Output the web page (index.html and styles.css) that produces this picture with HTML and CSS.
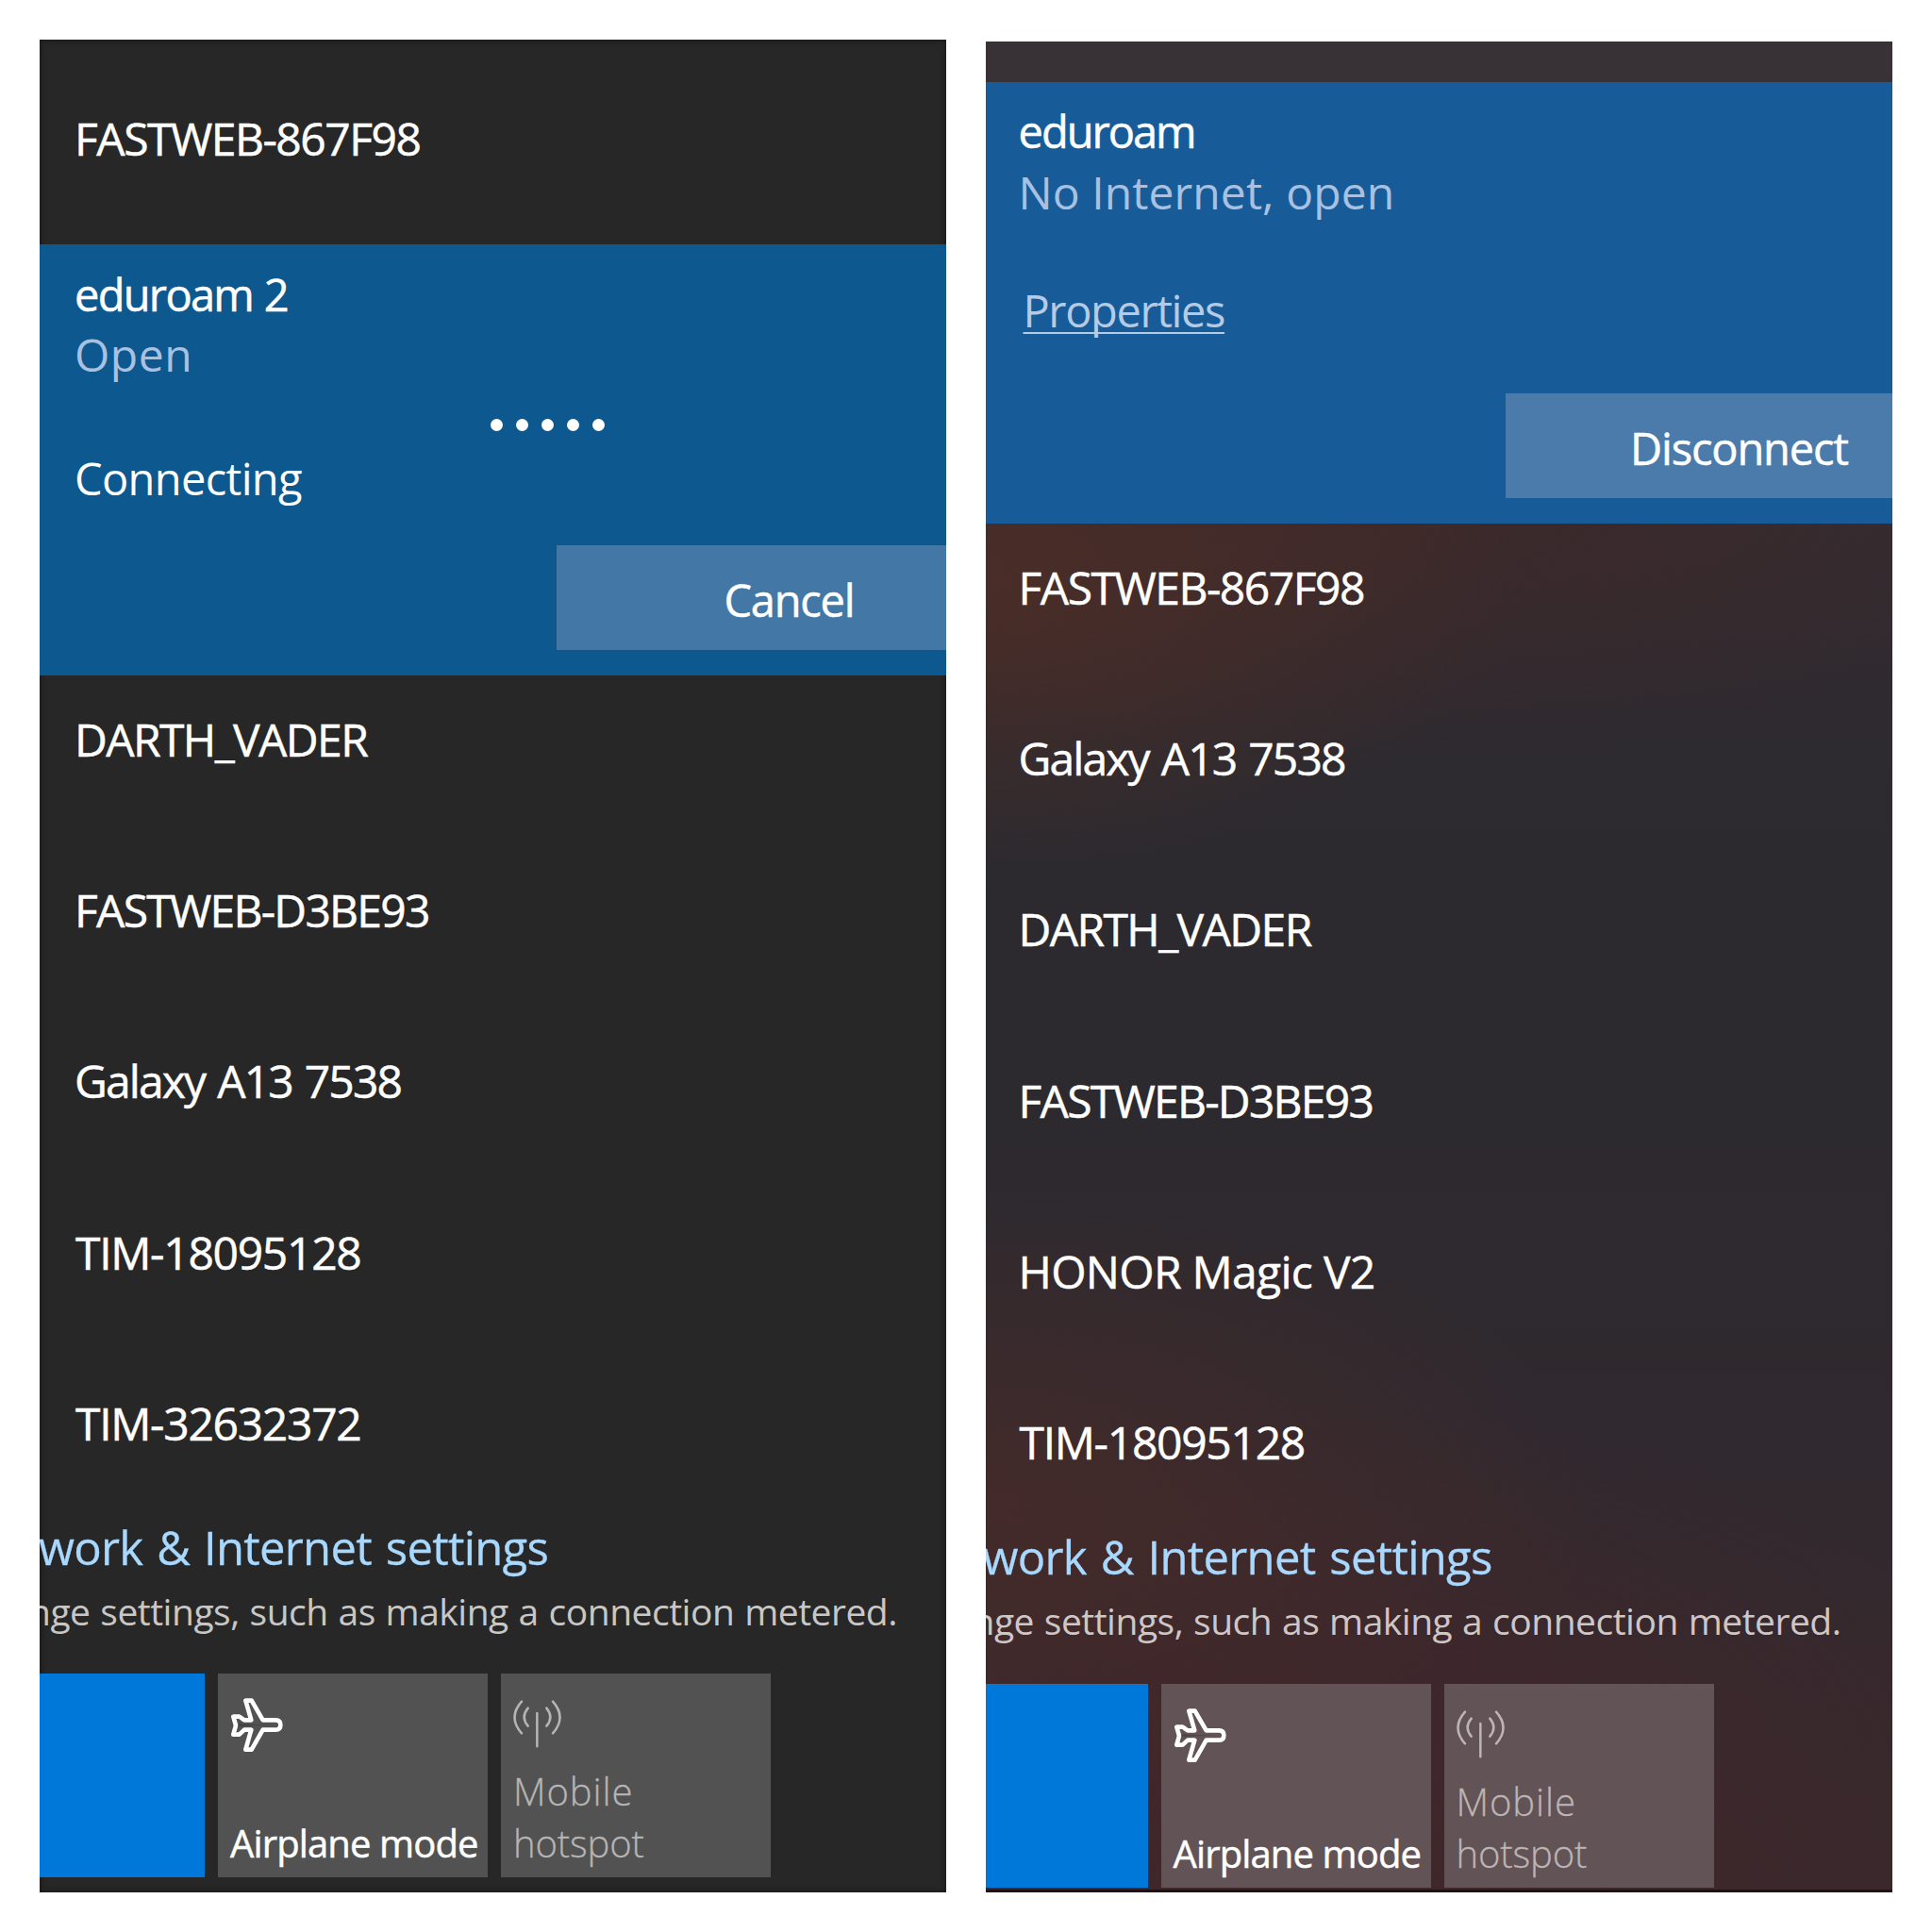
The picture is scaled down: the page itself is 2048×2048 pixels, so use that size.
FILE: index.html
```html
<!DOCTYPE html>
<html lang="en">
<head>
<meta charset="utf-8">
<title>Wi-Fi networks</title>
<link rel="stylesheet" href="styles.css">
</head>
<body>
<svg width="0" height="0" class="defs" aria-hidden="true">
  <symbol id="plane" viewBox="39 60 171 171">
    <path d="M88 68H107L143 130H184Q199 130 199 145.500T184 161H143L107 224H88L106 161H84L68 176H49L57 147L49 119H68L84 130H106Z" fill="none" stroke="#fff" stroke-width="14" stroke-linejoin="round"/>
    <path d="M62 147L70 142L110 145L175 145.500L110 148L70 150Z" fill="#3a3838" opacity=".6"/>
  </symbol>
  <symbol id="antenna" viewBox="68 72 162 156">
    <path d="M98 80Q53 130 98 181M118 101Q94 130 118 158M147 117V223M177 101Q201 130 177 158M197 80Q242 130 197 181" fill="none" stroke="currentColor" stroke-width="7.500" stroke-linecap="round"/>
  </symbol>
</svg>
<main class="board">
  <section class="panel panel-dark">
    <ul class="list list-top">
      <li class="ssid fastweb">FASTWEB-867F98</li>
    </ul>
    <article class="active">
      <h2 class="name name-numbered">eduroam 2</h2>
      <p class="status status-short">Open</p>
      <div class="dots"><i></i><i></i><i></i><i></i><i></i></div>
      <p class="state">Connecting</p>
      <button class="action cancel">Cancel</button>
    </article>
    <ul class="list">
      <li class="ssid">DARTH_VADER</li>
      <li class="ssid fastweb-d">FASTWEB-D3BE93</li>
      <li class="ssid galaxy">Galaxy A13 7538</li>
      <li class="ssid tim">TIM-18095128</li>
      <li class="ssid tim">TIM-32632372</li>
    </ul>
    <footer class="footer">
      <a class="link">work &amp; Internet settings</a>
      <p class="hint">nge settings, such as making a connection metered.</p>
      <div class="tiles">
        <div class="tile tile-on"></div>
        <div class="tile"><svg class="plane"><use href="#plane"/></svg><span class="label">Airplane mode</span></div>
        <div class="tile tile-off"><svg class="antenna"><use href="#antenna"/></svg><span class="mobile">Mobile</span><span class="hotspot">hotspot</span></div>
      </div>
    </footer>
  </section>
  <section class="panel panel-warm">
    <article class="active">
      <h2 class="name">eduroam</h2>
      <p class="status">No Internet, open</p>
      <a class="properties">Properties</a>
      <button class="action disconnect">Disconnect</button>
    </article>
    <ul class="list">
      <li class="ssid fastweb">FASTWEB-867F98</li>
      <li class="ssid galaxy">Galaxy A13 7538</li>
      <li class="ssid">DARTH_VADER</li>
      <li class="ssid fastweb-d">FASTWEB-D3BE93</li>
      <li class="ssid honor">HONOR Magic V2</li>
      <li class="ssid tim">TIM-18095128</li>
    </ul>
    <footer class="footer">
      <a class="link">work &amp; Internet settings</a>
      <p class="hint">nge settings, such as making a connection metered.</p>
      <div class="tiles">
        <div class="tile tile-on"></div>
        <div class="tile"><svg class="plane"><use href="#plane"/></svg><span class="label">Airplane mode</span></div>
        <div class="tile tile-off"><svg class="antenna"><use href="#antenna"/></svg><span class="mobile">Mobile</span><span class="hotspot">hotspot</span></div>
      </div>
    </footer>
  </section>
</main>
</body>
</html>
```
FILE: styles.css
```css
* { box-sizing: border-box; margin: 0; padding: 0; }
body { width: 2048px; height: 2048px; background: #fff; overflow: hidden; font-family: "Open Sans", "Noto Sans", sans-serif; color: #fff; }
.defs { display: block; }
.board { display: flex; gap: 42px; padding: 42px 42px 0; align-items: flex-start; }
.panel { width: 961px; height: 1964px; overflow: hidden; display: flex; flex-direction: column; }
.panel-dark { --inset: 37px; background: #272727; box-shadow: inset 0 0 6px #151517; padding-top: 37px; }
.panel-warm {
  --inset: 35px;
  width: 962px; height: 1962px; margin-top: 2px; padding-top: 43px;
  border-bottom: 3px solid #1e1216;
  background:
    radial-gradient(ellipse 560px 300px at 0 570px, #4a2d27, transparent),
    radial-gradient(ellipse 900px 260px at 40% 500px, rgba(64, 40, 40, .85), transparent),
    radial-gradient(ellipse 640px 330px at 0 1550px, rgba(74, 43, 40, .75), transparent),
    radial-gradient(ellipse 760px 420px at 36% 1860px, rgba(66, 38, 42, .9), transparent),
    linear-gradient(#383135 0, #383135 44px, #2e2a30 700px, #2c2a2e 1100px, #30292f 1480px, #33292e 1650px, #39282b 1962px);
}
.active { flex: none; display: flex; flex-direction: column; }
.panel-dark .active { height: 457px; padding-top: 21px; background: #0d588f; }
.panel-warm .active { height: 468px; padding-top: 20px; background: #175c98; }
.name, .status, .state { padding-left: var(--inset); line-height: 64px; font-weight: 400; }
.name, .ssid, .label, .action { -webkit-text-stroke: .5px; }
.name { font-size: 47px; letter-spacing: -2px; }
.name-numbered { letter-spacing: -1.700px; word-spacing: 1px; }
.status { font-size: 48px; letter-spacing: .1px; color: #a9c1e1; }
.status-short { letter-spacing: .5px; }
.panel-warm .status { line-height: 65px; }
.state { font-size: 47px; letter-spacing: -.65px; }
.dots { display: flex; gap: 14px; height: 67px; padding: 36px 0 0 478px; }
.dots i { width: 13px; height: 13px; border-radius: 50%; background: #fff; }
.properties { align-self: flex-start; margin: 61px 0 0 40px; height: 63px; line-height: 64px; font-size: 47px; letter-spacing: -1.4px; color: #b5cae4; text-decoration: underline; text-decoration-thickness: 2px; text-underline-offset: 5px; text-decoration-skip-ink: none; }
.action { align-self: flex-end; height: 111px; border: 0; color: #fff; font: 400 47px/64px "Open Sans", sans-serif; text-align: left; padding: 5px 0 0; }
.cancel { width: 413px; margin-top: 39px; padding-left: 178px; letter-spacing: -1.26px; background: #4378a6; }
.disconnect { width: 410px; margin-top: 57px; padding-left: 132px; letter-spacing: -1.15px; background: #4b7bab; }
.list { flex: none; list-style: none; height: 892px; }
.panel-dark .list-top { height: 180px; }
.panel-warm .list { height: 1063px; }
.ssid { height: 181.200px; padding: 38px 0 0 var(--inset); line-height: 60px; font-size: 48px; letter-spacing: -1.6px; white-space: nowrap; }
.fastweb { letter-spacing: -1.5px; }
.fastweb-d { letter-spacing: -1.75px; }
.galaxy { letter-spacing: -1.9px; word-spacing: 2.500px; }
.tim { letter-spacing: -1.3px; padding-left: calc(var(--inset) + 1px); }
.honor { letter-spacing: -.7px; }
.footer { display: flex; flex-direction: column; }
.link { margin-left: calc(var(--inset) - 38px); font-size: 49px; line-height: 64px; letter-spacing: -.75px; word-spacing: 3px; color: #a9d8ff; -webkit-text-stroke: .3px; white-space: nowrap; }
.hint { margin: 4px 0 0 calc(var(--inset) - 49px); font-size: 39px; line-height: 64px; letter-spacing: -.5px; word-spacing: 1.200px; color: #c9c7c5; white-space: nowrap; }
.tiles { display: flex; gap: 14px; margin-top: 34px; }
.panel-warm .hint { color: #cfc6c6; }
.panel-warm .tiles { margin-top: 35px; }
.tile { width: 286px; height: 216px; padding: 26px 0 9px 12px; display: flex; flex-direction: column; background: #525252; font-size: 40px; line-height: 54.300px; }
.panel-warm .tile { background: #615356; }
.panel-dark .tile-on, .panel-warm .tile-on { width: 175px; background: #0078d9; }
.panel-warm .tile-on { width: 172px; }
.plane { width: 57px; height: 57px; margin-left: 1px; }
.antenna { width: 54px; height: 52px; margin-top: 1px; }
.label { margin-top: auto; padding-left: 1px; letter-spacing: -.87px; white-space: nowrap; }
.tile-off { color: #b6b5b5; font-weight: 300; }
.panel-warm .tile-off { color: #bdb4b5; }
.mobile, .hotspot { padding-left: 1px; -webkit-text-stroke: .3px; }
.mobile { margin-top: auto; letter-spacing: .900px; }
.hotspot { letter-spacing: -.15px; }
```
